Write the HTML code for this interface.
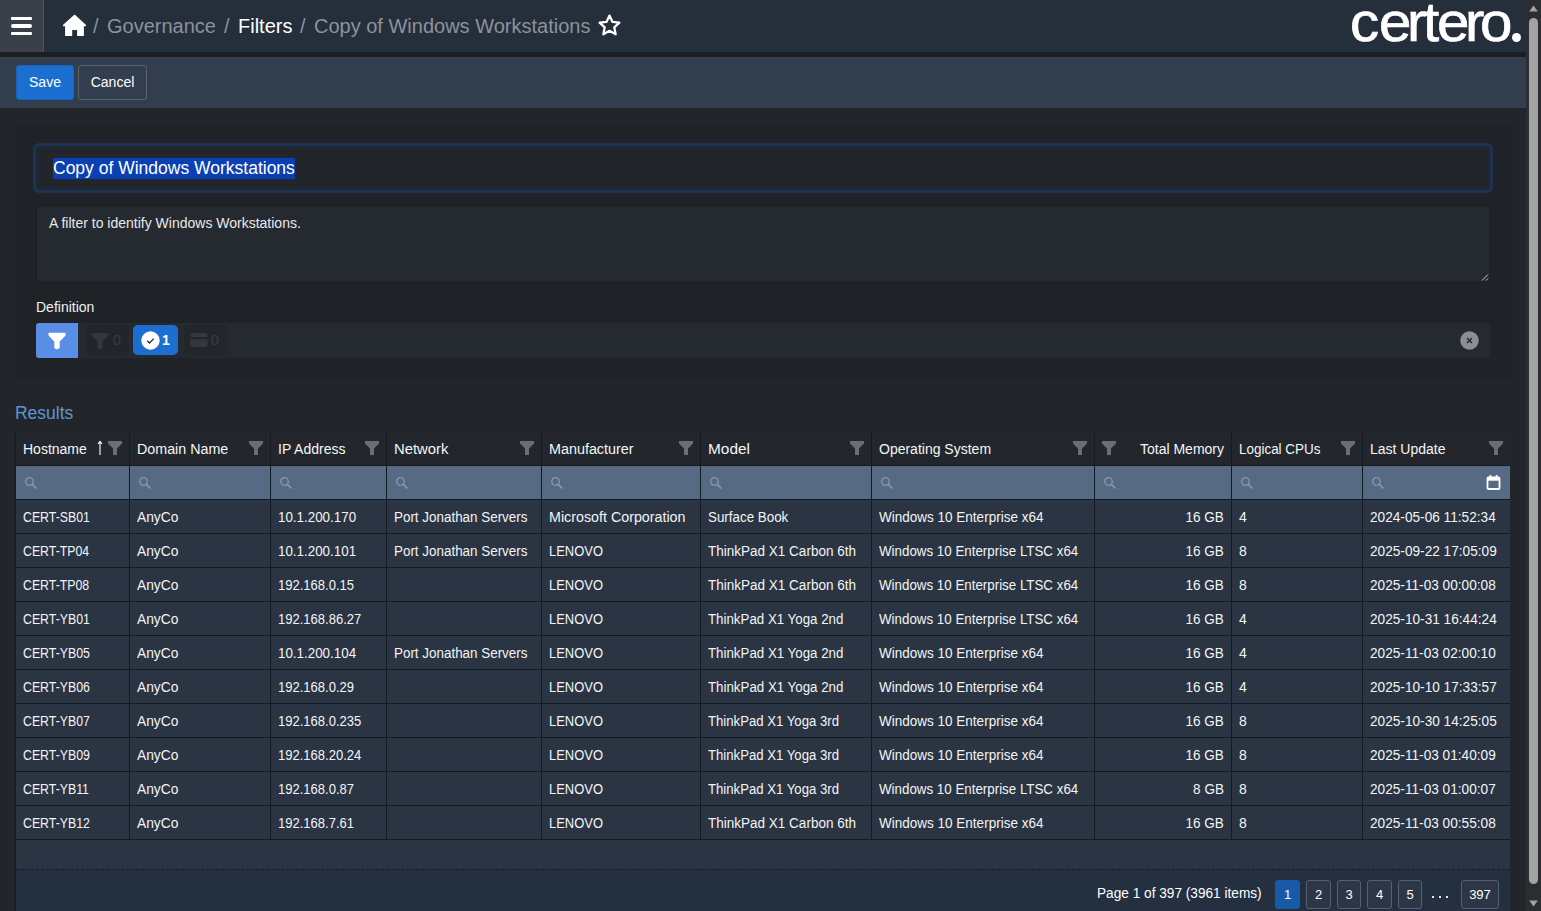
<!DOCTYPE html><html><head><meta charset="utf-8"><title>Copy of Windows Workstations</title><style>
*{box-sizing:border-box;margin:0;padding:0}
html,body{width:1541px;height:911px;overflow:hidden;background:#22252a;font-family:"Liberation Sans",sans-serif;color:#eceef0}
.abs{position:absolute}
#hdr{position:absolute;left:0;top:0;width:1526px;height:52px;background:#252e3b}
#burger{position:absolute;left:0;top:0;width:44px;height:52px;background:#39404a;border-right:1px solid #4d545e}
#burger i{position:absolute;left:11px;width:21px;height:3px;background:#fff;border-radius:1px}
.logo{position:absolute;top:-8px;font-size:55px;line-height:60px;color:#fff;-webkit-text-stroke:0.7px #fff;transform:scaleX(1.06);transform-origin:0 0}
#strip{position:absolute;left:0;top:52px;width:1526px;height:5px;background:#1b1e23}
#tb{position:absolute;left:0;top:57px;width:1526px;height:51px;background:#323d4e;border-top:1px solid #3a4049;border-bottom:1px solid #38414e}
.btn{position:absolute;top:7px;height:35px;font-size:14px;line-height:33px;text-align:center;border-radius:3px;color:#fff}
#save{left:16px;width:58px;background:#1a6fd0;border:1px solid #1a62b8}
#cancel{left:78px;width:69px;border:1px solid #5a6473;background:#323d4e}
.crumb{position:absolute;top:13px;font-size:20px;line-height:26px;white-space:nowrap}
#panel{position:absolute;left:15px;top:125px;width:1496px;height:253px;background:#1f2226}
#title{position:absolute;left:33px;top:143px;width:1460px;height:50px;border:3px solid #1c3451;border-radius:6px;background:#22252b;box-shadow:inset 0 0 0 1px #1a2a3e}
#sel{position:absolute;left:53px;top:158px;width:242px;height:21px;background:#0b3fb4}
#titletxt{position:absolute;left:53px;top:156px;font-size:17.5px;line-height:24px;color:#fff;white-space:nowrap}
#ta{position:absolute;left:36px;top:207px;width:1453px;height:74px;background:#252a31;border-left:1px solid #1a1d22}
#tatxt{position:absolute;left:49px;top:215px;font-size:14px;line-height:17px;color:#e8e8e8;white-space:nowrap}
#deflbl{position:absolute;left:36px;top:299px;font-size:14px;line-height:17px;color:#f0f0f0}
#defbar{position:absolute;left:36px;top:323px;width:1454px;height:35px;background:#252a31}
#fbtn{position:absolute;left:36px;top:323px;width:42px;height:35px;background:#5a8de6;border-radius:3px 0 0 3px}
.pill{position:absolute;top:325px;height:30px;border-radius:5px}
#results{position:absolute;left:15px;top:402px;font-size:18px;line-height:22px;color:#5e97cf;transform:scaleX(0.97);transform-origin:0 0}
#tbl{position:absolute;left:15px;top:432px;width:1496px}
.row{position:absolute;left:0;width:1496px;height:34px}
.cell{position:absolute;top:0;height:34px;border-left:1px solid #1a1e25;font-size:14px;line-height:34px;padding-left:7px;white-space:nowrap;overflow:hidden}
.hrow{background:#23272d}
.frow{background:#566a84}
.drow{background:#2a3341;border-bottom:1px solid #1a1e25}
.fi{position:absolute;top:9px}
.tx{display:inline-block;position:relative;top:2px;transform-origin:0 0}
.si{position:absolute;top:10px;left:8px}
#below{position:absolute;left:16px;top:840px;width:1494px;height:29px;background:#2b3443}
.htx{position:absolute;top:432px;height:33px;font-size:14px;line-height:34px;white-space:nowrap;color:#f5f6f7}
.dtx{position:absolute;height:33px;font-size:14px;line-height:35px;white-space:nowrap;color:#f2f4f6}
#pager{position:absolute;left:16px;top:869px;width:1494px;height:42px;background:#243040;border-top:1px dashed #161c25}
.pg{position:absolute;top:880px;height:29px;border:1px solid #556073;border-radius:3px;background:#2c3646;font-size:13px;line-height:28px;text-align:center;color:#fff}
#sb{position:absolute;left:1526px;top:0;width:15px;height:911px;background:#2b2d30}
#thumb{position:absolute;left:1529px;top:18px;width:9px;height:866px;background:#a3a3a3;border-radius:5px}
</style></head><body>
<div id="hdr"><div id="burger"><i style="top:17px"></i><i style="top:24px;height:4px;border-radius:2px"></i><i style="top:32px"></i></div></div>
<svg class="abs" style="left:62px;top:13px" width="25" height="24" viewBox="0 0 25 24"><path d="M12.6 2.6L23.2 12.4H21V22.2H16V16.2H9.3V22.2H4V12.4H1.8Z" fill="#fff" stroke="#fff" stroke-width="1.8" stroke-linejoin="round"/></svg>
<div class="crumb" style="left:93px;color:#8b939c">/</div>
<div class="crumb" style="left:107px;color:#8b939c">Governance</div>
<div class="crumb" style="left:224px;color:#8b939c">/</div>
<div class="crumb" style="left:238px;color:#fff">Filters</div>
<div class="crumb" style="left:300px;color:#8b939c">/</div>
<div class="crumb" style="left:314px;color:#8b939c">Copy of Windows Workstations</div>
<svg class="abs" style="left:597px;top:13px" width="25" height="25" viewBox="0 0 24 24"><path d="M12 2.5L14.9 8.6L21.5 9.3L16.6 13.8L17.9 20.4L12 17.1L6.1 20.4L7.4 13.8L2.5 9.3L9.1 8.6Z" fill="none" stroke="#fff" stroke-width="2.2" stroke-linejoin="round"/></svg>
<div class="logo" style="left:1350px">c</div>
<div class="logo" style="left:1379px">e</div>
<div class="logo" style="left:1407px">r</div>
<div class="logo" style="left:1423px">t</div>
<div class="logo" style="left:1437px">e</div>
<div class="logo" style="left:1465px">r</div>
<div class="logo" style="left:1480px">o</div>
<div class="abs" style="left:1511.5px;top:33px;width:9px;height:9px;border-radius:50%;background:#fff"></div>
<div id="strip"></div><div id="tb"><div class="btn" id="save">Save</div><div class="btn" id="cancel">Cancel</div></div>
<div id="panel"></div><div id="title"></div><div id="sel"></div><div id="titletxt">Copy of Windows Workstations</div>
<div id="ta"></div><div id="tatxt">A filter to identify Windows Workstations.</div>
<svg class="abs" style="left:1480px;top:272px" width="10" height="10" viewBox="0 0 10 10"><path d="M2 8.5L8 2.5M6 8.5L8 6.5" stroke="#c8c8c8" stroke-width="1"/></svg>
<div id="deflbl">Definition</div><div id="defbar"></div><div id="fbtn"></div>
<svg class="abs" style="left:48px;top:332px" width="18" height="18" viewBox="0 0 18 18"><path d="M1.2 1.5H16.8V3.2L11 9.2V15.5Q9 17.8 7 15.5V9.2L1.2 3.2Z" fill="#fff" stroke="#fff" stroke-width="1.4" stroke-linejoin="round"/></svg>
<div class="pill" style="left:85px;width:44px;background:#22262b"></div>
<svg class="abs" style="left:91px;top:332px" width="18" height="18" viewBox="0 0 18 18"><path d="M1.2 1.5H16.8V3.2L11 9.2V15.5Q9 17.8 7 15.5V9.2L1.2 3.2Z" fill="#33383e" stroke="#33383e" stroke-width="1.2" stroke-linejoin="round"/></svg>
<div class="abs" style="left:113px;top:331px;font-size:14px;line-height:18px;color:#383d43">0</div>
<div class="pill" style="left:133px;width:45px;background:#1c6fd1"></div>
<svg class="abs" style="left:141px;top:331px" width="19" height="19" viewBox="0 0 19 19"><circle cx="9.5" cy="9.5" r="9.2" fill="#fff"/><path d="M6.2 9.8L8.5 12L12.8 7.6" fill="none" stroke="#243246" stroke-width="1.3"/></svg>
<div class="abs" style="left:162px;top:331px;font-size:14px;line-height:18px;color:#fff;font-weight:bold">1</div>
<div class="pill" style="left:184px;width:44px;background:#22262b"></div>
<svg class="abs" style="left:190px;top:332px" width="18" height="16" viewBox="0 0 18 16"><rect x="0.5" y="1" width="17" height="14" rx="2.5" fill="#33383e"/><rect x="0.5" y="5" width="17" height="2.2" fill="#22262b"/></svg>
<div class="abs" style="left:211px;top:331px;font-size:14px;line-height:18px;color:#383d43">0</div>
<svg class="abs" style="left:1460px;top:331px" width="19" height="19" viewBox="0 0 19 19"><circle cx="9.5" cy="9.5" r="9.3" fill="#8b8f95"/><path d="M7 7L12 12M12 7L7 12" stroke="#1f2226" stroke-width="1.3"/></svg>
<div id="results">Results</div>
<div class="abs" style="left:15px;top:432px;width:1495px;height:33px;background:#23272d"></div><div class="abs" style="left:15px;top:465px;width:1495px;height:1px;background:#121a24"></div><div class="abs" style="left:15px;top:466px;width:1495px;height:33px;background:#566a84"></div><div class="abs" style="left:15px;top:499px;width:1495px;height:1px;background:#121a24"></div><div class="abs" style="left:15px;top:500px;width:1495px;height:33px;background:#2b3443"></div><div class="abs" style="left:15px;top:533px;width:1495px;height:1px;background:#121a24"></div><div class="abs" style="left:15px;top:534px;width:1495px;height:33px;background:#2b3443"></div><div class="abs" style="left:15px;top:567px;width:1495px;height:1px;background:#121a24"></div><div class="abs" style="left:15px;top:568px;width:1495px;height:33px;background:#2b3443"></div><div class="abs" style="left:15px;top:601px;width:1495px;height:1px;background:#121a24"></div><div class="abs" style="left:15px;top:602px;width:1495px;height:33px;background:#2b3443"></div><div class="abs" style="left:15px;top:635px;width:1495px;height:1px;background:#121a24"></div><div class="abs" style="left:15px;top:636px;width:1495px;height:33px;background:#2b3443"></div><div class="abs" style="left:15px;top:669px;width:1495px;height:1px;background:#121a24"></div><div class="abs" style="left:15px;top:670px;width:1495px;height:33px;background:#2b3443"></div><div class="abs" style="left:15px;top:703px;width:1495px;height:1px;background:#121a24"></div><div class="abs" style="left:15px;top:704px;width:1495px;height:33px;background:#2b3443"></div><div class="abs" style="left:15px;top:737px;width:1495px;height:1px;background:#121a24"></div><div class="abs" style="left:15px;top:738px;width:1495px;height:33px;background:#2b3443"></div><div class="abs" style="left:15px;top:771px;width:1495px;height:1px;background:#121a24"></div><div class="abs" style="left:15px;top:772px;width:1495px;height:33px;background:#2b3443"></div><div class="abs" style="left:15px;top:805px;width:1495px;height:1px;background:#121a24"></div><div class="abs" style="left:15px;top:806px;width:1495px;height:33px;background:#2b3443"></div><div class="abs" style="left:15px;top:839px;width:1495px;height:1px;background:#121a24"></div><div class="abs" style="left:15px;top:432px;width:1px;height:479px;background:#161b22"></div><div class="abs" style="left:129px;top:432px;width:1px;height:33px;background:#171b21"></div><div class="abs" style="left:129px;top:465px;width:1px;height:374px;background:#121a24"></div><div class="abs" style="left:270px;top:432px;width:1px;height:33px;background:#171b21"></div><div class="abs" style="left:270px;top:465px;width:1px;height:374px;background:#121a24"></div><div class="abs" style="left:386px;top:432px;width:1px;height:33px;background:#171b21"></div><div class="abs" style="left:386px;top:465px;width:1px;height:374px;background:#121a24"></div><div class="abs" style="left:541px;top:432px;width:1px;height:33px;background:#171b21"></div><div class="abs" style="left:541px;top:465px;width:1px;height:374px;background:#121a24"></div><div class="abs" style="left:700px;top:432px;width:1px;height:33px;background:#171b21"></div><div class="abs" style="left:700px;top:465px;width:1px;height:374px;background:#121a24"></div><div class="abs" style="left:871px;top:432px;width:1px;height:33px;background:#171b21"></div><div class="abs" style="left:871px;top:465px;width:1px;height:374px;background:#121a24"></div><div class="abs" style="left:1094px;top:432px;width:1px;height:33px;background:#171b21"></div><div class="abs" style="left:1094px;top:465px;width:1px;height:374px;background:#121a24"></div><div class="abs" style="left:1231px;top:432px;width:1px;height:33px;background:#171b21"></div><div class="abs" style="left:1231px;top:465px;width:1px;height:374px;background:#121a24"></div><div class="abs" style="left:1362px;top:432px;width:1px;height:33px;background:#171b21"></div><div class="abs" style="left:1362px;top:465px;width:1px;height:374px;background:#121a24"></div><div class="htx" style="left:23px"><span style="display:inline-block;transform:scaleX(1.000);transform-origin:0 0">Hostname</span></div><svg class="abs fi" style="left:108px;top:441px" width="14" height="14" viewBox="0 0 14 14"><path d="M0 0H14V2.5L9 7.5V14H5V7.5L0 2.5Z" fill="#6b6e72"/></svg><div class="htx" style="left:137px"><span style="display:inline-block;transform:scaleX(1.020);transform-origin:0 0">Domain Name</span></div><svg class="abs fi" style="left:249px;top:441px" width="14" height="14" viewBox="0 0 14 14"><path d="M0 0H14V2.5L9 7.5V14H5V7.5L0 2.5Z" fill="#6b6e72"/></svg><div class="htx" style="left:278px"><span style="display:inline-block;transform:scaleX(1.000);transform-origin:0 0">IP Address</span></div><svg class="abs fi" style="left:365px;top:441px" width="14" height="14" viewBox="0 0 14 14"><path d="M0 0H14V2.5L9 7.5V14H5V7.5L0 2.5Z" fill="#6b6e72"/></svg><div class="htx" style="left:394px"><span style="display:inline-block;transform:scaleX(1.060);transform-origin:0 0">Network</span></div><svg class="abs fi" style="left:520px;top:441px" width="14" height="14" viewBox="0 0 14 14"><path d="M0 0H14V2.5L9 7.5V14H5V7.5L0 2.5Z" fill="#6b6e72"/></svg><div class="htx" style="left:549px"><span style="display:inline-block;transform:scaleX(1.025);transform-origin:0 0">Manufacturer</span></div><svg class="abs fi" style="left:679px;top:441px" width="14" height="14" viewBox="0 0 14 14"><path d="M0 0H14V2.5L9 7.5V14H5V7.5L0 2.5Z" fill="#6b6e72"/></svg><div class="htx" style="left:708px"><span style="display:inline-block;transform:scaleX(1.100);transform-origin:0 0">Model</span></div><svg class="abs fi" style="left:850px;top:441px" width="14" height="14" viewBox="0 0 14 14"><path d="M0 0H14V2.5L9 7.5V14H5V7.5L0 2.5Z" fill="#6b6e72"/></svg><div class="htx" style="left:879px"><span style="display:inline-block;transform:scaleX(1.000);transform-origin:0 0">Operating System</span></div><svg class="abs fi" style="left:1073px;top:441px" width="14" height="14" viewBox="0 0 14 14"><path d="M0 0H14V2.5L9 7.5V14H5V7.5L0 2.5Z" fill="#6b6e72"/></svg><div class="htx" style="left:1095px;width:129px;text-align:right">Total Memory</div><svg class="abs fi" style="left:1102px;top:441px" width="14" height="14" viewBox="0 0 14 14"><path d="M0 0H14V2.5L9 7.5V14H5V7.5L0 2.5Z" fill="#6b6e72"/></svg><div class="htx" style="left:1239px"><span style="display:inline-block;transform:scaleX(0.960);transform-origin:0 0">Logical CPUs</span></div><svg class="abs fi" style="left:1341px;top:441px" width="14" height="14" viewBox="0 0 14 14"><path d="M0 0H14V2.5L9 7.5V14H5V7.5L0 2.5Z" fill="#6b6e72"/></svg><div class="htx" style="left:1370px"><span style="display:inline-block;transform:scaleX(1.000);transform-origin:0 0">Last Update</span></div><svg class="abs fi" style="left:1489px;top:441px" width="14" height="14" viewBox="0 0 14 14"><path d="M0 0H14V2.5L9 7.5V14H5V7.5L0 2.5Z" fill="#6b6e72"/></svg><svg class="abs" style="left:97px;top:440px" width="6" height="16" viewBox="0 0 6 16"><path d="M3 15V1.5M1 4L3 1.3L5 4" fill="none" stroke="#fff" stroke-width="1.1"/></svg><svg class="abs" style="left:24px;top:476px" width="14" height="14" viewBox="0 0 14 14"><circle cx="5.5" cy="5.5" r="3.8" fill="none" stroke="#8697ab" stroke-width="1.3"/><path d="M8.3 8.3L11.8 11.8" stroke="#8697ab" stroke-width="1.8" stroke-linecap="round"/></svg><svg class="abs" style="left:138px;top:476px" width="14" height="14" viewBox="0 0 14 14"><circle cx="5.5" cy="5.5" r="3.8" fill="none" stroke="#8697ab" stroke-width="1.3"/><path d="M8.3 8.3L11.8 11.8" stroke="#8697ab" stroke-width="1.8" stroke-linecap="round"/></svg><svg class="abs" style="left:279px;top:476px" width="14" height="14" viewBox="0 0 14 14"><circle cx="5.5" cy="5.5" r="3.8" fill="none" stroke="#8697ab" stroke-width="1.3"/><path d="M8.3 8.3L11.8 11.8" stroke="#8697ab" stroke-width="1.8" stroke-linecap="round"/></svg><svg class="abs" style="left:395px;top:476px" width="14" height="14" viewBox="0 0 14 14"><circle cx="5.5" cy="5.5" r="3.8" fill="none" stroke="#8697ab" stroke-width="1.3"/><path d="M8.3 8.3L11.8 11.8" stroke="#8697ab" stroke-width="1.8" stroke-linecap="round"/></svg><svg class="abs" style="left:550px;top:476px" width="14" height="14" viewBox="0 0 14 14"><circle cx="5.5" cy="5.5" r="3.8" fill="none" stroke="#8697ab" stroke-width="1.3"/><path d="M8.3 8.3L11.8 11.8" stroke="#8697ab" stroke-width="1.8" stroke-linecap="round"/></svg><svg class="abs" style="left:709px;top:476px" width="14" height="14" viewBox="0 0 14 14"><circle cx="5.5" cy="5.5" r="3.8" fill="none" stroke="#8697ab" stroke-width="1.3"/><path d="M8.3 8.3L11.8 11.8" stroke="#8697ab" stroke-width="1.8" stroke-linecap="round"/></svg><svg class="abs" style="left:880px;top:476px" width="14" height="14" viewBox="0 0 14 14"><circle cx="5.5" cy="5.5" r="3.8" fill="none" stroke="#8697ab" stroke-width="1.3"/><path d="M8.3 8.3L11.8 11.8" stroke="#8697ab" stroke-width="1.8" stroke-linecap="round"/></svg><svg class="abs" style="left:1103px;top:476px" width="14" height="14" viewBox="0 0 14 14"><circle cx="5.5" cy="5.5" r="3.8" fill="none" stroke="#8697ab" stroke-width="1.3"/><path d="M8.3 8.3L11.8 11.8" stroke="#8697ab" stroke-width="1.8" stroke-linecap="round"/></svg><svg class="abs" style="left:1240px;top:476px" width="14" height="14" viewBox="0 0 14 14"><circle cx="5.5" cy="5.5" r="3.8" fill="none" stroke="#8697ab" stroke-width="1.3"/><path d="M8.3 8.3L11.8 11.8" stroke="#8697ab" stroke-width="1.8" stroke-linecap="round"/></svg><svg class="abs" style="left:1371px;top:476px" width="14" height="14" viewBox="0 0 14 14"><circle cx="5.5" cy="5.5" r="3.8" fill="none" stroke="#8697ab" stroke-width="1.3"/><path d="M8.3 8.3L11.8 11.8" stroke="#8697ab" stroke-width="1.8" stroke-linecap="round"/></svg><svg class="abs" style="left:1486px;top:474px" width="15" height="17" viewBox="0 0 15 17"><rect x="1.5" y="3.5" width="12" height="11.5" rx="1" fill="none" stroke="#fff" stroke-width="1.8"/><rect x="1.5" y="3.5" width="12" height="3.2" fill="#fff"/><rect x="3.5" y="1" width="1.8" height="3" fill="#fff"/><rect x="9.7" y="1" width="1.8" height="3" fill="#fff"/></svg><div class="dtx" style="left:23px;top:500px"><span style="display:inline-block;transform:scaleX(0.880);transform-origin:0 0">CERT-SB01</span></div><div class="dtx" style="left:137px;top:500px"><span style="display:inline-block;transform:scaleX(0.985);transform-origin:0 0">AnyCo</span></div><div class="dtx" style="left:278px;top:500px"><span style="display:inline-block;transform:scaleX(0.955);transform-origin:0 0">10.1.200.170</span></div><div class="dtx" style="left:394px;top:500px"><span style="display:inline-block;transform:scaleX(0.958);transform-origin:0 0">Port Jonathan Servers</span></div><div class="dtx" style="left:549px;top:500px"><span style="display:inline-block;transform:scaleX(1.020);transform-origin:0 0">Microsoft Corporation</span></div><div class="dtx" style="left:708px;top:500px"><span style="display:inline-block;transform:scaleX(0.955);transform-origin:0 0">Surface Book</span></div><div class="dtx" style="left:879px;top:500px"><span style="display:inline-block;transform:scaleX(0.965);transform-origin:0 0">Windows 10 Enterprise x64</span></div><div class="dtx" style="left:1095px;width:129px;top:500px;text-align:right"><span style="display:inline-block;transform:scaleX(0.965);transform-origin:100% 0">16 GB</span></div><div class="dtx" style="left:1239px;top:500px"><span style="display:inline-block;transform:scaleX(1.000);transform-origin:0 0">4</span></div><div class="dtx" style="left:1370px;top:500px"><span style="display:inline-block;transform:scaleX(0.975);transform-origin:0 0">2024-05-06 11:52:34</span></div><div class="dtx" style="left:23px;top:534px"><span style="display:inline-block;transform:scaleX(0.880);transform-origin:0 0">CERT-TP04</span></div><div class="dtx" style="left:137px;top:534px"><span style="display:inline-block;transform:scaleX(0.985);transform-origin:0 0">AnyCo</span></div><div class="dtx" style="left:278px;top:534px"><span style="display:inline-block;transform:scaleX(0.955);transform-origin:0 0">10.1.200.101</span></div><div class="dtx" style="left:394px;top:534px"><span style="display:inline-block;transform:scaleX(0.958);transform-origin:0 0">Port Jonathan Servers</span></div><div class="dtx" style="left:549px;top:534px"><span style="display:inline-block;transform:scaleX(0.925);transform-origin:0 0">LENOVO</span></div><div class="dtx" style="left:708px;top:534px"><span style="display:inline-block;transform:scaleX(0.965);transform-origin:0 0">ThinkPad X1 Carbon 6th</span></div><div class="dtx" style="left:879px;top:534px"><span style="display:inline-block;transform:scaleX(0.953);transform-origin:0 0">Windows 10 Enterprise LTSC x64</span></div><div class="dtx" style="left:1095px;width:129px;top:534px;text-align:right"><span style="display:inline-block;transform:scaleX(0.965);transform-origin:100% 0">16 GB</span></div><div class="dtx" style="left:1239px;top:534px"><span style="display:inline-block;transform:scaleX(1.000);transform-origin:0 0">8</span></div><div class="dtx" style="left:1370px;top:534px"><span style="display:inline-block;transform:scaleX(0.975);transform-origin:0 0">2025-09-22 17:05:09</span></div><div class="dtx" style="left:23px;top:568px"><span style="display:inline-block;transform:scaleX(0.880);transform-origin:0 0">CERT-TP08</span></div><div class="dtx" style="left:137px;top:568px"><span style="display:inline-block;transform:scaleX(0.985);transform-origin:0 0">AnyCo</span></div><div class="dtx" style="left:278px;top:568px"><span style="display:inline-block;transform:scaleX(0.930);transform-origin:0 0">192.168.0.15</span></div><div class="dtx" style="left:549px;top:568px"><span style="display:inline-block;transform:scaleX(0.925);transform-origin:0 0">LENOVO</span></div><div class="dtx" style="left:708px;top:568px"><span style="display:inline-block;transform:scaleX(0.965);transform-origin:0 0">ThinkPad X1 Carbon 6th</span></div><div class="dtx" style="left:879px;top:568px"><span style="display:inline-block;transform:scaleX(0.953);transform-origin:0 0">Windows 10 Enterprise LTSC x64</span></div><div class="dtx" style="left:1095px;width:129px;top:568px;text-align:right"><span style="display:inline-block;transform:scaleX(0.965);transform-origin:100% 0">16 GB</span></div><div class="dtx" style="left:1239px;top:568px"><span style="display:inline-block;transform:scaleX(1.000);transform-origin:0 0">8</span></div><div class="dtx" style="left:1370px;top:568px"><span style="display:inline-block;transform:scaleX(0.975);transform-origin:0 0">2025-11-03 00:00:08</span></div><div class="dtx" style="left:23px;top:602px"><span style="display:inline-block;transform:scaleX(0.880);transform-origin:0 0">CERT-YB01</span></div><div class="dtx" style="left:137px;top:602px"><span style="display:inline-block;transform:scaleX(0.985);transform-origin:0 0">AnyCo</span></div><div class="dtx" style="left:278px;top:602px"><span style="display:inline-block;transform:scaleX(0.930);transform-origin:0 0">192.168.86.27</span></div><div class="dtx" style="left:549px;top:602px"><span style="display:inline-block;transform:scaleX(0.925);transform-origin:0 0">LENOVO</span></div><div class="dtx" style="left:708px;top:602px"><span style="display:inline-block;transform:scaleX(0.950);transform-origin:0 0">ThinkPad X1 Yoga 2nd</span></div><div class="dtx" style="left:879px;top:602px"><span style="display:inline-block;transform:scaleX(0.953);transform-origin:0 0">Windows 10 Enterprise LTSC x64</span></div><div class="dtx" style="left:1095px;width:129px;top:602px;text-align:right"><span style="display:inline-block;transform:scaleX(0.965);transform-origin:100% 0">16 GB</span></div><div class="dtx" style="left:1239px;top:602px"><span style="display:inline-block;transform:scaleX(1.000);transform-origin:0 0">4</span></div><div class="dtx" style="left:1370px;top:602px"><span style="display:inline-block;transform:scaleX(0.975);transform-origin:0 0">2025-10-31 16:44:24</span></div><div class="dtx" style="left:23px;top:636px"><span style="display:inline-block;transform:scaleX(0.880);transform-origin:0 0">CERT-YB05</span></div><div class="dtx" style="left:137px;top:636px"><span style="display:inline-block;transform:scaleX(0.985);transform-origin:0 0">AnyCo</span></div><div class="dtx" style="left:278px;top:636px"><span style="display:inline-block;transform:scaleX(0.955);transform-origin:0 0">10.1.200.104</span></div><div class="dtx" style="left:394px;top:636px"><span style="display:inline-block;transform:scaleX(0.958);transform-origin:0 0">Port Jonathan Servers</span></div><div class="dtx" style="left:549px;top:636px"><span style="display:inline-block;transform:scaleX(0.925);transform-origin:0 0">LENOVO</span></div><div class="dtx" style="left:708px;top:636px"><span style="display:inline-block;transform:scaleX(0.950);transform-origin:0 0">ThinkPad X1 Yoga 2nd</span></div><div class="dtx" style="left:879px;top:636px"><span style="display:inline-block;transform:scaleX(0.965);transform-origin:0 0">Windows 10 Enterprise x64</span></div><div class="dtx" style="left:1095px;width:129px;top:636px;text-align:right"><span style="display:inline-block;transform:scaleX(0.965);transform-origin:100% 0">16 GB</span></div><div class="dtx" style="left:1239px;top:636px"><span style="display:inline-block;transform:scaleX(1.000);transform-origin:0 0">4</span></div><div class="dtx" style="left:1370px;top:636px"><span style="display:inline-block;transform:scaleX(0.975);transform-origin:0 0">2025-11-03 02:00:10</span></div><div class="dtx" style="left:23px;top:670px"><span style="display:inline-block;transform:scaleX(0.880);transform-origin:0 0">CERT-YB06</span></div><div class="dtx" style="left:137px;top:670px"><span style="display:inline-block;transform:scaleX(0.985);transform-origin:0 0">AnyCo</span></div><div class="dtx" style="left:278px;top:670px"><span style="display:inline-block;transform:scaleX(0.930);transform-origin:0 0">192.168.0.29</span></div><div class="dtx" style="left:549px;top:670px"><span style="display:inline-block;transform:scaleX(0.925);transform-origin:0 0">LENOVO</span></div><div class="dtx" style="left:708px;top:670px"><span style="display:inline-block;transform:scaleX(0.950);transform-origin:0 0">ThinkPad X1 Yoga 2nd</span></div><div class="dtx" style="left:879px;top:670px"><span style="display:inline-block;transform:scaleX(0.965);transform-origin:0 0">Windows 10 Enterprise x64</span></div><div class="dtx" style="left:1095px;width:129px;top:670px;text-align:right"><span style="display:inline-block;transform:scaleX(0.965);transform-origin:100% 0">16 GB</span></div><div class="dtx" style="left:1239px;top:670px"><span style="display:inline-block;transform:scaleX(1.000);transform-origin:0 0">4</span></div><div class="dtx" style="left:1370px;top:670px"><span style="display:inline-block;transform:scaleX(0.975);transform-origin:0 0">2025-10-10 17:33:57</span></div><div class="dtx" style="left:23px;top:704px"><span style="display:inline-block;transform:scaleX(0.880);transform-origin:0 0">CERT-YB07</span></div><div class="dtx" style="left:137px;top:704px"><span style="display:inline-block;transform:scaleX(0.985);transform-origin:0 0">AnyCo</span></div><div class="dtx" style="left:278px;top:704px"><span style="display:inline-block;transform:scaleX(0.930);transform-origin:0 0">192.168.0.235</span></div><div class="dtx" style="left:549px;top:704px"><span style="display:inline-block;transform:scaleX(0.925);transform-origin:0 0">LENOVO</span></div><div class="dtx" style="left:708px;top:704px"><span style="display:inline-block;transform:scaleX(0.940);transform-origin:0 0">ThinkPad X1 Yoga 3rd</span></div><div class="dtx" style="left:879px;top:704px"><span style="display:inline-block;transform:scaleX(0.965);transform-origin:0 0">Windows 10 Enterprise x64</span></div><div class="dtx" style="left:1095px;width:129px;top:704px;text-align:right"><span style="display:inline-block;transform:scaleX(0.965);transform-origin:100% 0">16 GB</span></div><div class="dtx" style="left:1239px;top:704px"><span style="display:inline-block;transform:scaleX(1.000);transform-origin:0 0">8</span></div><div class="dtx" style="left:1370px;top:704px"><span style="display:inline-block;transform:scaleX(0.975);transform-origin:0 0">2025-10-30 14:25:05</span></div><div class="dtx" style="left:23px;top:738px"><span style="display:inline-block;transform:scaleX(0.880);transform-origin:0 0">CERT-YB09</span></div><div class="dtx" style="left:137px;top:738px"><span style="display:inline-block;transform:scaleX(0.985);transform-origin:0 0">AnyCo</span></div><div class="dtx" style="left:278px;top:738px"><span style="display:inline-block;transform:scaleX(0.930);transform-origin:0 0">192.168.20.24</span></div><div class="dtx" style="left:549px;top:738px"><span style="display:inline-block;transform:scaleX(0.925);transform-origin:0 0">LENOVO</span></div><div class="dtx" style="left:708px;top:738px"><span style="display:inline-block;transform:scaleX(0.940);transform-origin:0 0">ThinkPad X1 Yoga 3rd</span></div><div class="dtx" style="left:879px;top:738px"><span style="display:inline-block;transform:scaleX(0.965);transform-origin:0 0">Windows 10 Enterprise x64</span></div><div class="dtx" style="left:1095px;width:129px;top:738px;text-align:right"><span style="display:inline-block;transform:scaleX(0.965);transform-origin:100% 0">16 GB</span></div><div class="dtx" style="left:1239px;top:738px"><span style="display:inline-block;transform:scaleX(1.000);transform-origin:0 0">8</span></div><div class="dtx" style="left:1370px;top:738px"><span style="display:inline-block;transform:scaleX(0.975);transform-origin:0 0">2025-11-03 01:40:09</span></div><div class="dtx" style="left:23px;top:772px"><span style="display:inline-block;transform:scaleX(0.880);transform-origin:0 0">CERT-YB11</span></div><div class="dtx" style="left:137px;top:772px"><span style="display:inline-block;transform:scaleX(0.985);transform-origin:0 0">AnyCo</span></div><div class="dtx" style="left:278px;top:772px"><span style="display:inline-block;transform:scaleX(0.930);transform-origin:0 0">192.168.0.87</span></div><div class="dtx" style="left:549px;top:772px"><span style="display:inline-block;transform:scaleX(0.925);transform-origin:0 0">LENOVO</span></div><div class="dtx" style="left:708px;top:772px"><span style="display:inline-block;transform:scaleX(0.940);transform-origin:0 0">ThinkPad X1 Yoga 3rd</span></div><div class="dtx" style="left:879px;top:772px"><span style="display:inline-block;transform:scaleX(0.953);transform-origin:0 0">Windows 10 Enterprise LTSC x64</span></div><div class="dtx" style="left:1095px;width:129px;top:772px;text-align:right"><span style="display:inline-block;transform:scaleX(0.965);transform-origin:100% 0">8 GB</span></div><div class="dtx" style="left:1239px;top:772px"><span style="display:inline-block;transform:scaleX(1.000);transform-origin:0 0">8</span></div><div class="dtx" style="left:1370px;top:772px"><span style="display:inline-block;transform:scaleX(0.975);transform-origin:0 0">2025-11-03 01:00:07</span></div><div class="dtx" style="left:23px;top:806px"><span style="display:inline-block;transform:scaleX(0.880);transform-origin:0 0">CERT-YB12</span></div><div class="dtx" style="left:137px;top:806px"><span style="display:inline-block;transform:scaleX(0.985);transform-origin:0 0">AnyCo</span></div><div class="dtx" style="left:278px;top:806px"><span style="display:inline-block;transform:scaleX(0.930);transform-origin:0 0">192.168.7.61</span></div><div class="dtx" style="left:549px;top:806px"><span style="display:inline-block;transform:scaleX(0.925);transform-origin:0 0">LENOVO</span></div><div class="dtx" style="left:708px;top:806px"><span style="display:inline-block;transform:scaleX(0.965);transform-origin:0 0">ThinkPad X1 Carbon 6th</span></div><div class="dtx" style="left:879px;top:806px"><span style="display:inline-block;transform:scaleX(0.965);transform-origin:0 0">Windows 10 Enterprise x64</span></div><div class="dtx" style="left:1095px;width:129px;top:806px;text-align:right"><span style="display:inline-block;transform:scaleX(0.965);transform-origin:100% 0">16 GB</span></div><div class="dtx" style="left:1239px;top:806px"><span style="display:inline-block;transform:scaleX(1.000);transform-origin:0 0">8</span></div><div class="dtx" style="left:1370px;top:806px"><span style="display:inline-block;transform:scaleX(0.975);transform-origin:0 0">2025-11-03 00:55:08</span></div>
<div id="below"></div><div id="pager"></div>
<div class="abs" style="left:1097px;top:884px;font-size:14px;line-height:18px;color:#fff;white-space:nowrap;transform:scaleX(0.975);transform-origin:0 0">Page 1 of 397 (3961 items)</div>
<div class="pg" style="left:1275px;width:25px;background:#185aa8;border-color:#1a5aa0">1</div>
<div class="pg" style="left:1306px;width:25px">2</div>
<div class="pg" style="left:1337px;width:24px">3</div>
<div class="pg" style="left:1367px;width:25px">4</div>
<div class="pg" style="left:1398px;width:24px">5</div>
<div class="pg" style="left:1461px;width:38px">397</div>
<div class="abs" style="left:1432px;top:896px;width:2px;height:2px;background:#e8e8e8"></div>
<div class="abs" style="left:1439px;top:896px;width:2px;height:2px;background:#e8e8e8"></div>
<div class="abs" style="left:1446px;top:896px;width:2px;height:2px;background:#e8e8e8"></div>
<div id="sb"></div><div id="thumb"></div>
<svg class="abs" style="left:1529px;top:5px" width="9" height="7" viewBox="0 0 9 7"><path d="M4.5 0.5L8.8 6.5H0.2Z" fill="#a3a3a3"/></svg>
<svg class="abs" style="left:1529px;top:900px" width="9" height="7" viewBox="0 0 9 7"><path d="M4.5 6.5L8.8 0.5H0.2Z" fill="#a3a3a3"/></svg>
</body></html>
